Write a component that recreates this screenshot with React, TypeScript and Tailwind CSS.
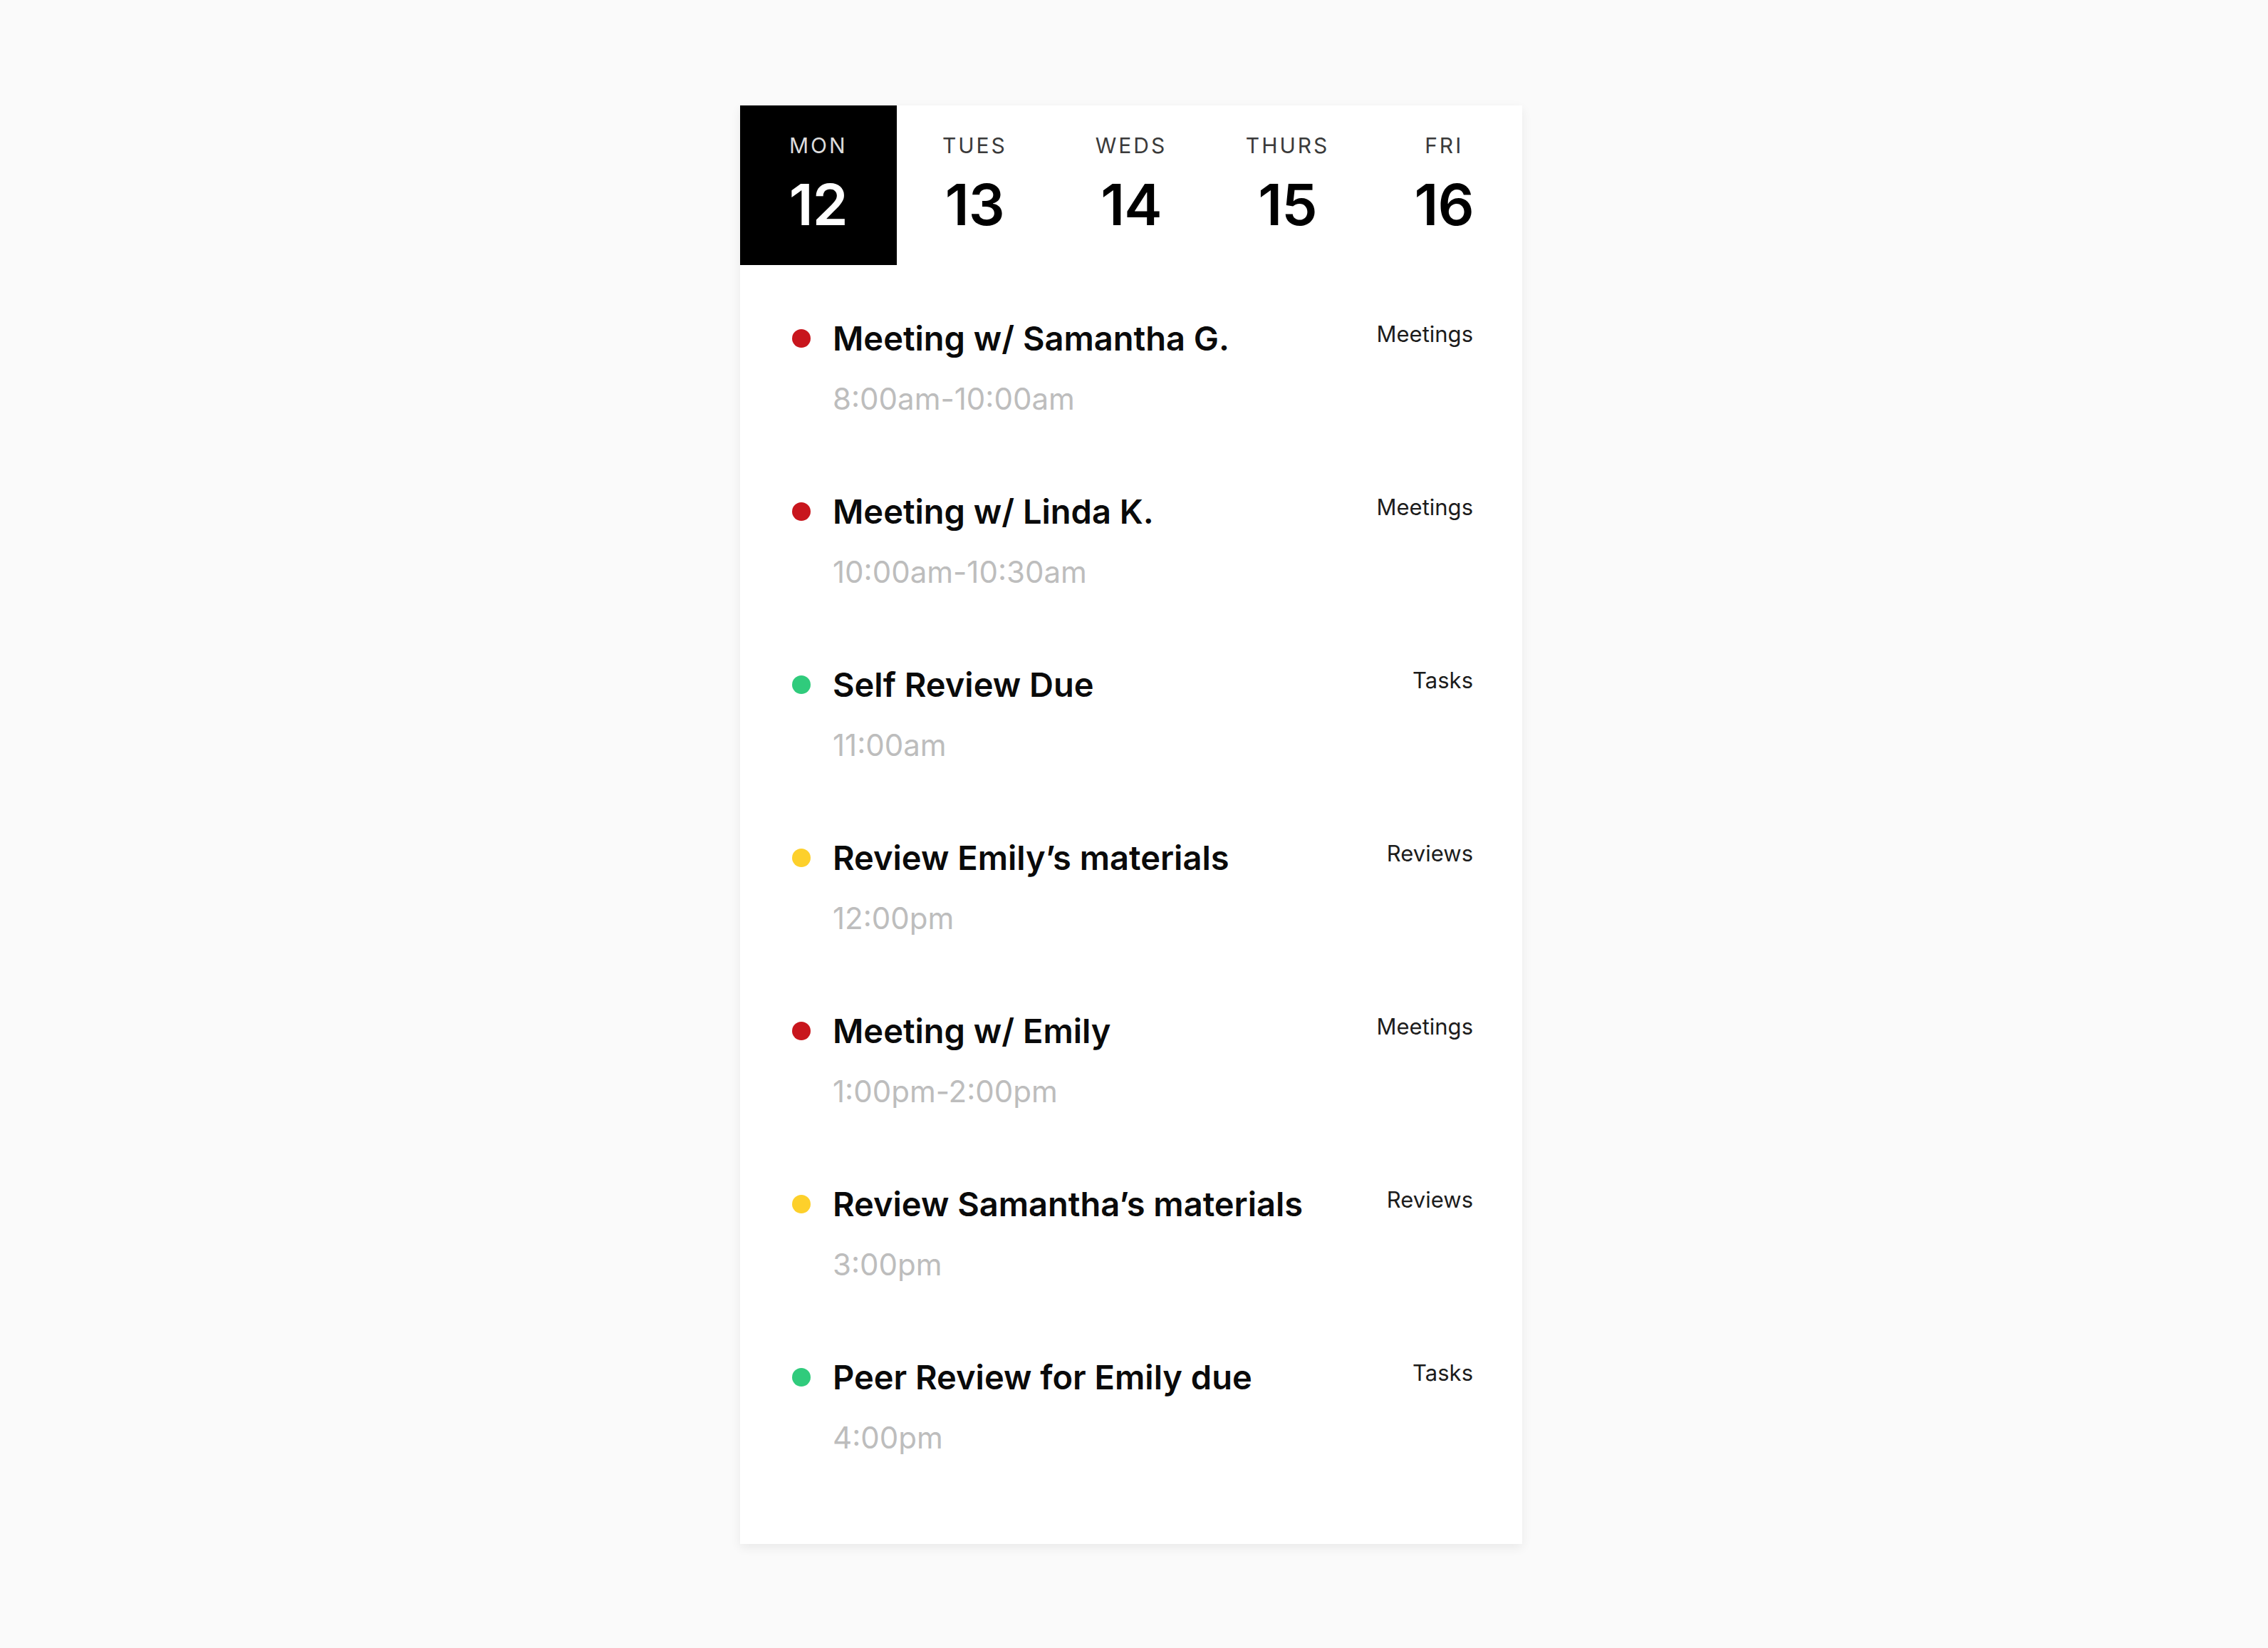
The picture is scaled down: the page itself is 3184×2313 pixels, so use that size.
type Day = { label: string; date: number };

type Agenda = {
  title: string;
  time: string;
  category: string;
  dot: string;
};

const days: Day[] = [
  { label: "MON", date: 12 },
  { label: "TUES", date: 13 },
  { label: "WEDS", date: 14 },
  { label: "THURS", date: 15 },
  { label: "FRI", date: 16 },
];

const events: Agenda[] = [
  { title: "Meeting w/ Samantha G.", time: "8:00am-10:00am", category: "Meetings", dot: "bg-[#c8161d]" },
  { title: "Meeting w/ Linda K.", time: "10:00am-10:30am", category: "Meetings", dot: "bg-[#c8161d]" },
  { title: "Self Review Due", time: "11:00am", category: "Tasks", dot: "bg-[#30cb7c]" },
  { title: "Review Emily’s materials", time: "12:00pm", category: "Reviews", dot: "bg-[#fdd02b]" },
  { title: "Meeting w/ Emily", time: "1:00pm-2:00pm", category: "Meetings", dot: "bg-[#c8161d]" },
  { title: "Review Samantha’s materials", time: "3:00pm", category: "Reviews", dot: "bg-[#fdd02b]" },
  { title: "Peer Review for Emily due", time: "4:00pm", category: "Tasks", dot: "bg-[#30cb7c]" },
];

function DayTab({ day, active }: { day: Day; active: boolean }) {
  return (
    <div
      className={`flex h-[224px] flex-col items-center pt-[41px] ${
        active ? "bg-black text-white" : "bg-white text-black"
      }`}
    >
      <span
        className={`text-[30px] leading-none tracking-[0.1em] ${
          active ? "text-[#dcdcdc]" : "text-[#3a3a3a]"
        }`}
      >
        {day.label}
      </span>
      <span className="mt-[28px] text-[80px] font-semibold leading-none tracking-[-0.01em]">
        {day.date}
      </span>
    </div>
  );
}

function EventRow({ item }: { item: Agenda }) {
  return (
    <div className="flex items-start justify-between">
      <div className="flex flex-col">
        <div className="flex items-center gap-[31px]">
          <span className={`h-[26px] w-[26px] shrink-0 rounded-full ${item.dot}`} />
          <span className="text-[47px] font-semibold leading-[48px] text-[#0a0a0a]">
            {item.title}
          </span>
        </div>
        <span className="mt-[40px] pl-[57px] text-[42px] leading-none text-[#bdbdbd]">
          {item.time}
        </span>
      </div>
      <span className="mt-[2px] text-[31px] leading-none text-[#1c1c1c]">
        {item.category}
      </span>
    </div>
  );
}

export default function App() {
  return (
    <div
      className="min-h-screen bg-[#fafafa] pt-[148px] pb-[146px]"
      style={{ fontFamily: "Inter, 'Noto Sans', sans-serif" }}
    >
      <div className="flex justify-center pr-[8px]">
        <div className="w-[1098px] bg-white shadow-[0_5px_14px_rgba(0,0,0,0.07)]">
          <div className="grid grid-cols-5">
            {days.map((d, i) => (
              <DayTab key={d.label} day={d} active={i === 0} />
            ))}
          </div>
          <div className="flex flex-col gap-[113px] pt-[79px] pb-[128px] pl-[73px] pr-[69px]">
            {events.map((e) => (
              <EventRow key={e.title} item={e} />
            ))}
          </div>
        </div>
      </div>
    </div>
  );
}
